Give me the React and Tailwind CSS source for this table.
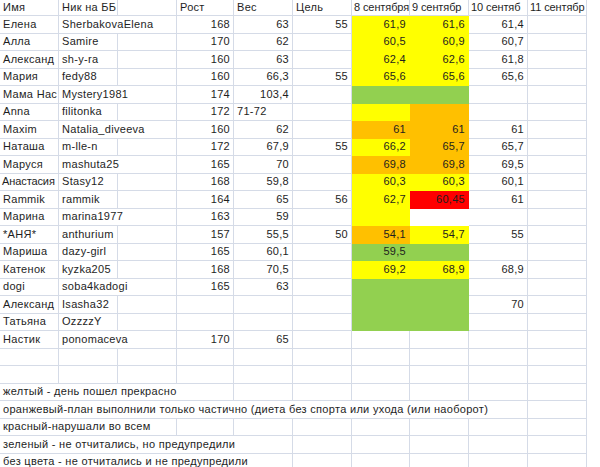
import React from 'react';

const Y = 'bg-[#ffff00] border-[#ffff00]';
const O = 'bg-[#ffc000] border-[#ffc000]';
const R = 'bg-[#ff0000] border-[#ff0000]';
const G = 'bg-[#92d050] border-[#92d050]';
const W = 'bg-white border-[#d5dbe7]';

// c(text, opts) -> cell description
const c = (t = '', o = {}) => ({ t, ...o });
const n = (t, o = {}) => ({ t, right: true, ...o });

// name, nick, wide nick, рост, вес, цель, 8 сент, 9 сент, 10 сент
const people = [
  ['Елена', 'SherbakovaElena', true, '168', '63', '55', n('61,9', { fill: Y }), n('61,6', { fill: Y }), '61,4'],
  ['Алла', 'Samire', false, '170', '62', '', n('60,5', { fill: Y }), n('60,9', { fill: Y }), '60,7'],
  ['Александ', 'sh-y-ra', false, '160', '63', '', n('62,4', { fill: Y }), n('62,6', { fill: Y }), '61,8'],
  ['Мария', 'fedy88', false, '160', '66,3', '55', n('65,6', { fill: Y }), n('65,6', { fill: Y }), '65,6'],
  ['Мама Нас', 'Mystery1981', true, '174', '103,4', '', 'green2', null, ''],
  ['Anna', 'filitonka', false, '172', c('71-72'), '', c('', { fill: Y }), c('', { fill: O }), ''],
  ['Maxim', 'Natalia_diveeva', true, '160', '62', '', n('61', { fill: O }), n('61', { fill: O }), '61'],
  ['Наташа', 'm-lle-n', false, '172', '67,9', '55', n('66,2', { fill: Y }), n('65,7', { fill: O }), '65,7'],
  ['Маруся', 'mashuta25', true, '165', '70', '', n('69,8', { fill: O }), n('69,8', { fill: O }), '69,5'],
  ['Анастасия', 'Stasy12', false, '168', '59,8', '', n('60,3', { fill: Y }), n('60,3', { fill: Y }), '60,1'],
  ['Rammik', 'rammik', false, '164', '65', '56', n('62,7', { fill: Y }), n('60,45', { fill: R }), '61'],
  ['Марина', 'marina1977', true, '163', '59', '', c('', { fill: Y }), c('', { fill: 'bg-white border-white' }), ''],
  ['*АНЯ*', 'anthurium', false, '157', '55,5', '50', n('54,1', { fill: O }), n('54,7', { fill: Y }), '55'],
  ['Мариша', 'dazy-girl', false, '165', '60,1', '', n('59,5', { fill: G }), c('', { fill: G }), ''],
  ['Катенок', 'kyzka205', false, '168', '70,5', '', n('69,2', { fill: Y }), n('68,9', { fill: Y }), '68,9'],
  ['dogi', 'soba4kadogi', true, '165', '63', '', c('', { fill: G }), c('', { fill: G }), ''],
  ['Александ', 'Isasha32', false, '', '', '', c('', { fill: G }), c('', { fill: G }), '70'],
  ['Татьяна', 'OzzzzY', false, '', '', '', c('', { fill: G }), c('', { fill: G }), ''],
  ['Настик', 'ponomaceva', true, '170', '65', '', '', '', ''],
];

const legend = [
  ['желтый - день пошел прекрасно', 4],
  ['оранжевый-план выполнили только частично (диета без спорта или ухода (или наоборот)', 9],
  ['красный-нарушали во всем', 3],
  ['зеленый - не отчитались, но предупредили', 5],
  ['без цвета - не отчитались и не предупредили', 5],
];

const spanCls = {
  1: 'col-span-1',
  2: 'col-span-2',
  3: 'col-span-3',
  4: 'col-span-4',
  5: 'col-span-5',
  9: 'col-span-9',
  10: 'col-span-10',
};

function Cell({ t = '', right = false, span = 1, fill = W, clip = false, tight = false }) {
  return (
    <div
      className={`${spanCls[span]} ${fill} border-r border-b flex items-center min-w-0 whitespace-nowrap ${
        clip ? 'overflow-hidden' : 'overflow-visible'
      } ${right ? 'justify-end pr-[3px]' : tight ? 'justify-start pl-[2px]' : 'justify-start pl-[3px]'} ${
        tight ? 'tracking-[-0.1px]' : ''
      }`}
    >
      <span className="relative z-10">{t}</span>
    </div>
  );
}

const norm = (v) => (typeof v === 'string' ? (v ? n(v) : c('')) : v);

function Row({ p }) {
  const [name, nick, wide, rost, ves, goal, d8, d9, d10] = p;
  const cells = [];
  cells.push(<Cell key="a" t={name} clip tight={name === 'Анастасия'} />);
  cells.push(<Cell key="b" t={nick} span={wide ? 2 : 1} />);
  if (!wide) cells.push(<Cell key="b2" />);
  cells.push(<Cell key="c" {...norm(rost)} />);
  cells.push(<Cell key="d" {...norm(ves)} />);
  cells.push(<Cell key="e" {...norm(goal)} />);
  if (d8 === 'green2') {
    cells.push(<Cell key="f" span={2} fill={G} />);
  } else {
    cells.push(<Cell key="f" {...norm(d8)} />);
    cells.push(<Cell key="g" {...norm(d9)} />);
  }
  cells.push(<Cell key="h" {...norm(d10)} />);
  cells.push(<Cell key="i" />);
  cells.push(<div key="z" />);
  return cells;
}

const headers = ['Имя', 'Ник на ББ', '', 'Рост', 'Вес', 'Цель', '8 сентября', '9 сентябр', '10 сентяб', '11 сентябр'];

export default function App() {
  return (
    <div
      className="w-[600px] h-[467px] overflow-hidden bg-white text-[#1e1e1e] text-[11px] leading-none tracking-[0.3px]"
      style={{ fontFamily: '"Liberation Sans", Arial, sans-serif' }}
    >
      <div className="grid grid-cols-[59px_59px_59px_57px_59px_59px_58px_59px_59px_59px_1fr] grid-rows-[16px] auto-rows-[17.5px]">
        {headers.map((h, i) => (
          <Cell key={'h' + i} t={h} clip tight={i >= 6} />
        ))}
        <div />
        {people.map((p, i) => (
          <Row key={i} p={p} />
        ))}
        {[0, 1].map((r) => (
          <React.Fragment key={'e' + r}>
            {Array.from({ length: 10 }).map((_, i) => (
              <Cell key={i} />
            ))}
            <div />
          </React.Fragment>
        ))}
        {legend.map(([t, span], r) => (
          <React.Fragment key={'l' + r}>
            <Cell t={t} span={span} />
            {Array.from({ length: 10 - span }).map((_, i) => (
              <Cell key={i} />
            ))}
            <div />
          </React.Fragment>
        ))}
      </div>
    </div>
  );
}
